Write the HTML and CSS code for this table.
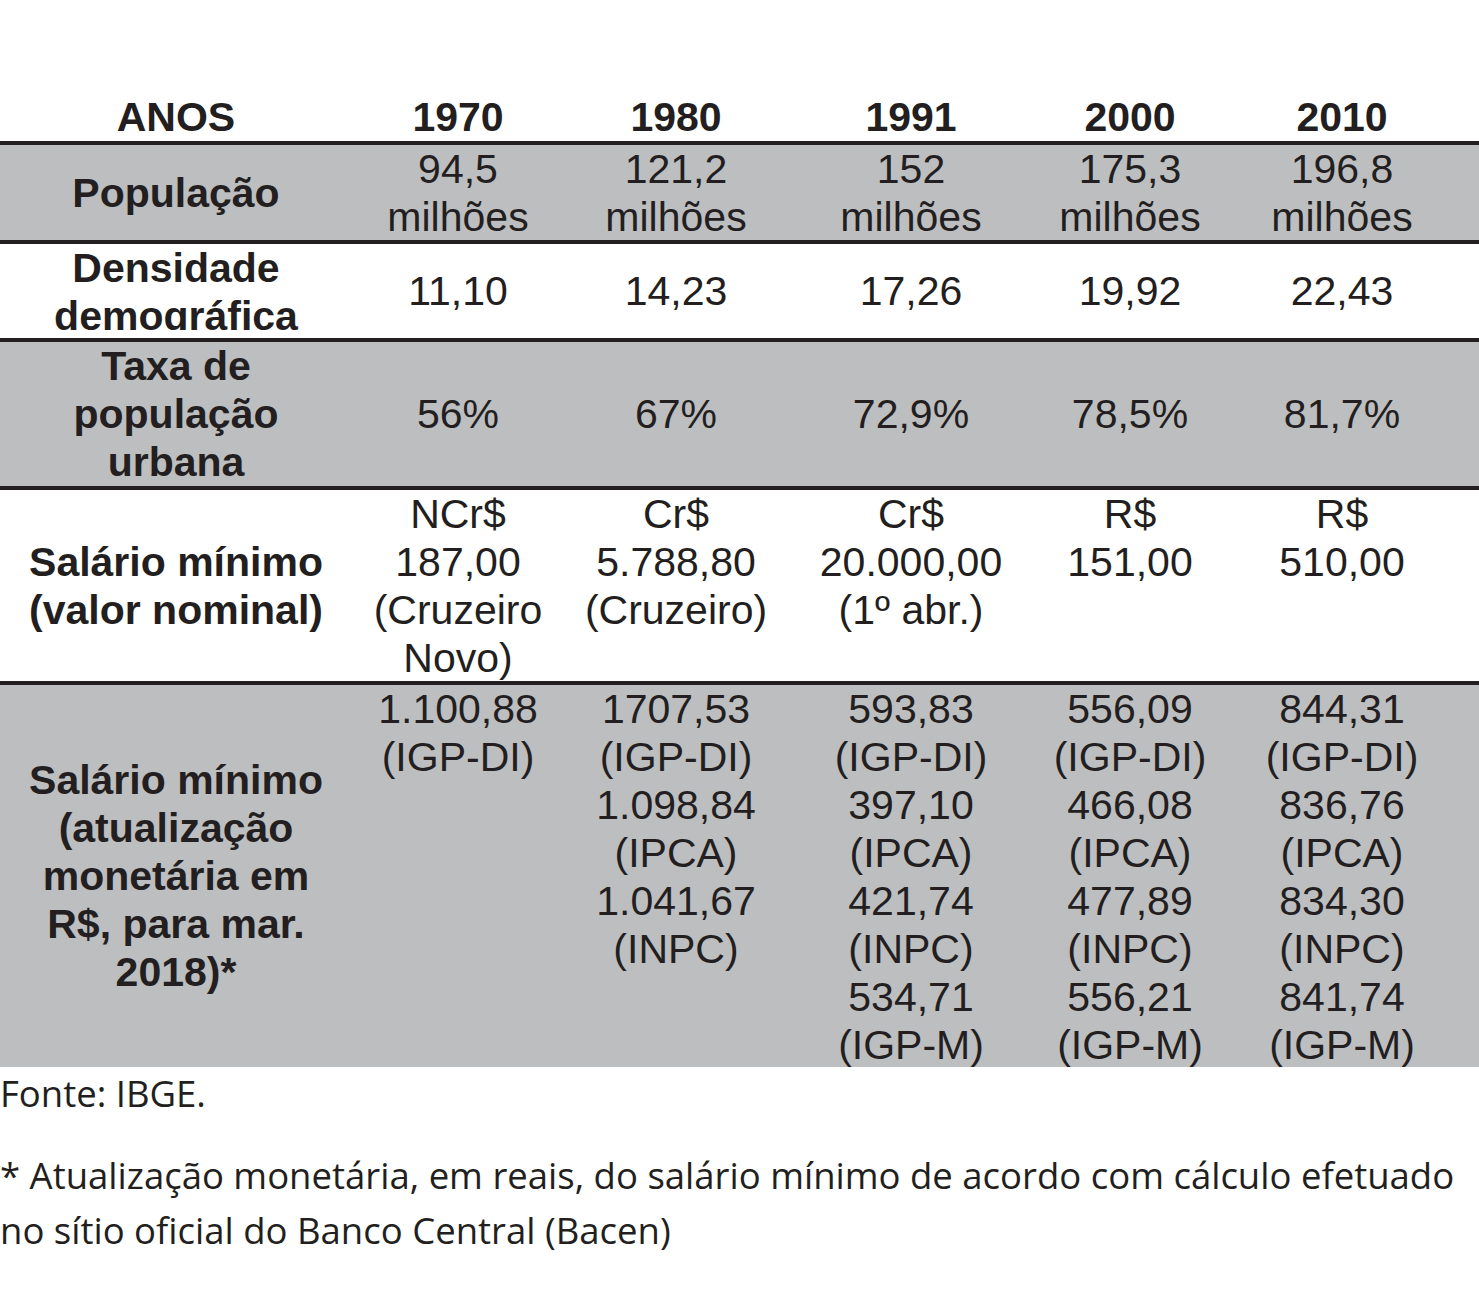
FILE: index.html
```html
<!DOCTYPE html>
<html lang="pt">
<head>
<meta charset="utf-8">
<link rel="stylesheet" href="styles.css">
</head>
<body>
<div class="page">
  <div class="table">
    <div class="row head">
      <div class="cell label">ANOS</div>
      <div class="cell">1970</div>
      <div class="cell">1980</div>
      <div class="cell">1991</div>
      <div class="cell">2000</div>
      <div class="cell">2010</div>
    </div>
    <div class="row gray r-pop">
      <div class="cell label mid">População</div>
      <div class="cell">94,5<br>milhões</div>
      <div class="cell">121,2<br>milhões</div>
      <div class="cell">152<br>milhões</div>
      <div class="cell">175,3<br>milhões</div>
      <div class="cell">196,8<br>milhões</div>
    </div>
    <div class="row r-dens">
      <div class="cell label clip">Densidade<br>demográfica</div>
      <div class="cell mid">11,10</div>
      <div class="cell mid">14,23</div>
      <div class="cell mid">17,26</div>
      <div class="cell mid">19,92</div>
      <div class="cell mid">22,43</div>
    </div>
    <div class="row gray r-taxa">
      <div class="cell label mid">Taxa de<br>população<br>urbana</div>
      <div class="cell mid">56%</div>
      <div class="cell mid">67%</div>
      <div class="cell mid">72,9%</div>
      <div class="cell mid">78,5%</div>
      <div class="cell mid">81,7%</div>
    </div>
    <div class="row r-nom">
      <div class="cell label mid">Salário mínimo<br>(valor nominal)</div>
      <div class="cell">NCr$<br>187,00<br>(Cruzeiro<br>Novo)</div>
      <div class="cell">Cr$<br>5.788,80<br>(Cruzeiro)</div>
      <div class="cell">Cr$<br>20.000,00<br>(1º abr.)</div>
      <div class="cell">R$<br>151,00</div>
      <div class="cell">R$<br>510,00</div>
    </div>
    <div class="row gray r-atu">
      <div class="cell label mid">Salário mínimo<br>(atualização<br>monetária em<br>R$, para mar.<br>2018)*</div>
      <div class="cell">1.100,88<br>(IGP-DI)</div>
      <div class="cell">1707,53<br>(IGP-DI)<br>1.098,84<br>(IPCA)<br>1.041,67<br>(INPC)</div>
      <div class="cell">593,83<br>(IGP-DI)<br>397,10<br>(IPCA)<br>421,74<br>(INPC)<br>534,71<br>(IGP-M)</div>
      <div class="cell">556,09<br>(IGP-DI)<br>466,08<br>(IPCA)<br>477,89<br>(INPC)<br>556,21<br>(IGP-M)</div>
      <div class="cell">844,31<br>(IGP-DI)<br>836,76<br>(IPCA)<br>834,30<br>(INPC)<br>841,74<br>(IGP-M)</div>
    </div>
  </div>
  <p class="src">Fonte: IBGE.</p>
  <p class="note">* Atualização monetária, em reais, do salário mínimo de acordo com cálculo efetuado<br>no sítio oficial do Banco Central (Bacen)</p>
</div>
</body>
</html>
```

FILE: styles.css
```css
html, body {
  margin: 0;
  padding: 0;
  background: #ffffff;
}
.page {
  width: 1479px;
  padding-top: 93px;
  color: #231f20;
}
.table {
  font-family: "Liberation Sans", Arial, sans-serif;
  font-size: 41px;
  line-height: 48px;
}
.row {
  display: grid;
  grid-template-columns: 352px 212px 224px 246px 192px 232px 21px;
  border-top: 4px solid #231f20;
  overflow: hidden;
}
.row.head {
  border-top: none;
  height: 48px;
  font-weight: bold;
}
.gray {
  background: #bdbec0;
}
.r-pop { height: 95px; }
.r-dens { height: 94px; }
.r-taxa { height: 144px; }
.r-nom { height: 191px; }
.r-atu { height: 382px; }
.cell {
  text-align: center;
  white-space: nowrap;
  overflow: hidden;
}
.label {
  font-weight: bold;
}
.mid {
  align-self: center;
}
.clip {
  height: 86px;
  align-self: start;
}
.src, .note {
  font-family: "Open Sans", "Noto Sans", sans-serif;
  margin: 0;
  color: #231f20;
  white-space: nowrap;
}
.src {
  font-size: 36.5px;
  line-height: 50px;
  margin-top: 1px;
}
.note {
  font-size: 36.5px;
  line-height: 55px;
  margin-top: 30px;
}
```
